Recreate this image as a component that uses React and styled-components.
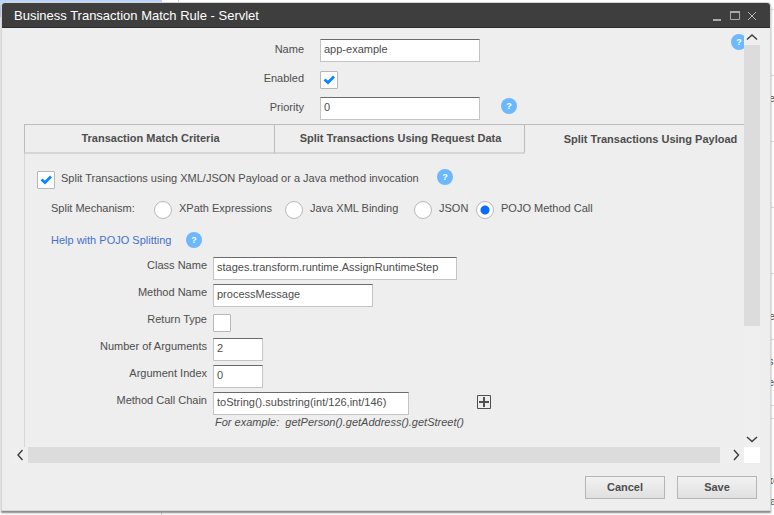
import React, { useState } from 'react';
import styled, { createGlobalStyle, css } from 'styled-components';

const GlobalStyle = createGlobalStyle`
  * { box-sizing: border-box; }
  body {
    margin: 0;
    background: #fff;
    color: #4d4d4d;
    font: 11px/14px "Liberation Sans", Arial, sans-serif;
  }
  button, input { font: inherit; color: inherit; margin: 0; }
`;

const Page = styled.div`
  position: relative;
  min-height: 100vh;
  padding: 3px 4px 5px 2px;
  overflow: hidden;
`;

const Backdrop = styled.div`
  position: absolute;
  inset: 0;
  display: grid;
  grid-template-columns: 162px 17px 1fr 12px;
  overflow: hidden;
`;

const SideList = styled.div`
  border-right: 1px solid #d0d0d0;
  &::before {
    content: '';
    display: block;
    height: 17px;
    background: #bad5fb;
  }
`;

const Gutter = styled.div`
  border-right: 1px solid #d8d8d8;
  margin-bottom: 8px;
`;

const BackRows = styled.div`
  grid-column: 4;
  overflow: hidden;
  white-space: nowrap;
`;

const BackRow = styled.div`
  height: ${(p) => p.$height}px;
  padding: ${(p) => p.$pad || 0}px 0 0 ${(p) => p.$left || 7}px;
  border-bottom: 1px solid #d8d8d8;
  line-height: 21px;
`;

const Dialog = styled.section`
  position: relative;
  background: #eee;
  border-radius: 3px 3px 0 0;
  box-shadow: 0 0 0 1px #d6d6d6, 0 2px 2px 1px #888;
`;

const TitleBar = styled.header`
  display: flex;
  align-items: center;
  height: 25px;
  padding: 1px 12px 0;
  background: #3e3e3e;
  border-bottom: 1px solid #2c2c2c;
  border-radius: 3px 3px 0 0;
  color: #fff;
`;

const Title = styled.h1`
  flex: 1;
  margin: 0;
  font-size: 13px;
  font-weight: normal;
`;

const WindowButtons = styled.div`
  display: flex;
  gap: 6px;
`;

const IconButton = styled.button`
  display: flex;
  align-items: center;
  justify-content: center;
  width: ${(p) => p.$size || 12}px;
  height: ${(p) => p.$size || 12}px;
  padding: 0;
  border: 0;
  background: none;
`;

const ScrollPane = styled.div`
  display: grid;
  grid-template: auto 16px / minmax(0, 1fr) 16px;
  padding: 1px 10px 0;
`;

const Viewport = styled.div`
  position: relative;
  overflow: hidden;
  padding: 10px 0 0 12px;
`;

const ScrollTrack = styled.div`
  display: flex;
  flex-direction: ${(p) => (p.$vertical ? 'column' : 'row')};
  background: #efefef;
`;

const Thumb = styled.div`
  flex: ${(p) => p.$share} 0 0;
  background: #dcdcdc;
`;

const TrackRest = styled.div`
  flex: ${(p) => p.$share} 0 0;
`;

const Corner = styled.div`
  background: #fff;
`;

const TopHelp = styled.div`
  position: absolute;
  top: 5px;
  right: -3px;
`;

const Form = styled.div`
  display: grid;
  grid-template-columns: ${(p) => p.$label}px minmax(0, 1fr);
  column-gap: ${(p) => p.$gap}px;
  row-gap: ${(p) => p.$rowGap}px;
`;

const FieldLabel = styled.label`
  padding-top: ${(p) => p.$top}px;
  text-align: right;
  line-height: 14px;
`;

const Control = styled.div`
  display: flex;
  align-items: center;
  gap: ${(p) => p.$gap || 0}px;
  height: 23px;
`;

const TextInput = styled.input`
  width: ${(p) => p.$width}px;
  height: 23px;
  padding: 0 3px 3px;
  border: 1px solid #c4c4c4;
  border-top-color: #6b6b6b;
  border-radius: 0;
  background: #fff;
  outline: none;
`;

const markBox = css`
  appearance: none;
  display: block;
  width: 18px;
  height: 18px;
  border: 1px solid #b8b8b8;
  background: #fff no-repeat center;
`;

const CheckWrap = styled.span`
  display: grid;
  flex: none;
  > * { grid-area: 1 / 1; }
  svg { pointer-events: none; visibility: hidden; }
  input:checked + svg { visibility: visible; }
`;

const CheckInput = styled.input`
  ${markBox}
  border-radius: 1px;
`;

const RadioInput = styled.input`
  ${markBox}
  flex: none;
  border-radius: 50%;
  &:checked {
    background: radial-gradient(circle, #0a6cff 3px, #0a6cff 4px, #fff 5px);
  }
`;

const HelpButton = styled.button`
  display: block;
  flex: none;
  width: 16px;
  height: 16px;
  padding: 0;
  border: 0;
  border-radius: 50%;
  background: #6bb8ff;
  color: #fff;
  font-weight: bold;
  font-size: 9px;
  line-height: 16px;
  text-align: center;
`;

const HelpRaised = styled.span`
  padding-bottom: 6px;
`;

const Tabs = styled.div`
  display: flex;
  margin-top: 4px;
`;

const Tab = styled.button`
  flex: 0 0 250px;
  height: 30px;
  padding: 0 0 2px 2px;
  border: 1px solid #bcbcbc;
  border-width: 1px 0 2px 1px;
  border-bottom-color: #d6d6d6;
  background: #eee;
  font-weight: bold;
  &[aria-selected='true'] {
    padding-bottom: 0;
    border-bottom-color: #eee;
  }
`;

const Panel = styled.div`
  padding: 17px 0 18px 12px;
  border-left: 1px solid #d6d6d6;
`;

const Line = styled.div`
  display: flex;
  align-items: center;
  gap: ${(p) => p.$gap}px;
  height: 18px;
`;

const Raised = styled.label`
  min-width: ${(p) => p.$min || 0}px;
  padding-bottom: 4px;
`;

const Mechanisms = styled.div`
  display: grid;
  grid-template-columns: 103px 131px 129px 62px auto;
  align-items: center;
  height: 42px;
  padding-left: 14px;
`;

const Legend = styled.span`
  padding-bottom: 4px;
`;

const RadioOption = styled.div`
  display: flex;
  align-items: center;
  gap: 7px;
`;

const HelpRow = styled.div`
  display: flex;
  align-items: center;
  height: 18px;
  padding-left: 14px;
`;

const HelpLink = styled.a`
  min-width: 135px;
  color: #4470d0;
  text-decoration: none;
`;

const CallFields = styled.div`
  padding-top: 8px;
`;

const PlusButton = styled(IconButton)`
  align-self: flex-start;
  margin: 3px 0 0 68px;
`;

const Hint = styled.p`
  margin: 0;
  padding-left: 178px;
  font-style: italic;
`;

const Footer = styled.footer`
  display: flex;
  justify-content: flex-end;
  gap: 12px;
  padding: 13px 13px 11px;
`;

const ActionButton = styled.button`
  width: 80px;
  height: 23px;
  padding: 0 0 2px;
  border: 1px solid #b5b5b5;
  background: linear-gradient(#f2f2f2, #e0e0e0);
  font-weight: bold;
`;

const arrows = {
  up: 'M3 10.5 8 6l5 4.5',
  down: 'M3 6l5 4.5L13 6',
  left: 'M10.5 3 6 8l4.5 5',
  right: 'M6 3l4.5 5L6 13',
};

function Arrow({ to }) {
  return (
    <IconButton type="button" $size={16} aria-label={`Scroll ${to}`}>
      <svg width="16" height="16" fill="none" stroke="#3c3c3c" strokeWidth="1.4">
        <path d={arrows[to]} />
      </svg>
    </IconButton>
  );
}

function Help() {
  return <HelpButton type="button" aria-label="Help">?</HelpButton>;
}

function Checkbox({ id, initial = false }) {
  return (
    <CheckWrap>
      <CheckInput type="checkbox" id={id} defaultChecked={initial} />
      <svg width="18" height="18" fill="none" stroke="#0a84ff" strokeWidth="2.8">
        <path d="M4.5 8.5 8 11.5 14 5.5" />
      </svg>
    </CheckWrap>
  );
}

const tabs = [
  'Transaction Match Criteria',
  'Split Transactions Using Request Data',
  'Split Transactions Using Payload',
];

const mechanisms = ['XPath Expressions', 'Java XML Binding', 'JSON', 'POJO Method Call'];

const callFields = [
  { id: 'class', label: 'Class Name', value: 'stages.transform.runtime.AssignRuntimeStep', width: 244 },
  { id: 'method', label: 'Method Name', value: 'processMessage', width: 160 },
  { id: 'return', label: 'Return Type', check: true },
  { id: 'count', label: 'Number of Arguments', value: '2', width: 50 },
  { id: 'index', label: 'Argument Index', value: '0', width: 50 },
  { id: 'chain', label: 'Method Call Chain', value: 'toString().substring(int/126,int/146)', width: 196, add: true },
];

export default function App() {
  const [tab, setTab] = useState(2);
  const [mechanism, setMechanism] = useState('POJO Method Call');

  return (
    <Page>
      <GlobalStyle />
      <Backdrop aria-hidden="true">
        <SideList />
        <Gutter />
        <BackRows>
          <BackRow $height={10} />
          <BackRow $height={66} />
          <BackRow $height={66} $pad={12}>e</BackRow>
          <BackRow $height={66} />
          <BackRow $height={66} />
          <BackRow $height={66} $pad={32}>e</BackRow>
          <BackRow $height={66} $pad={11} $left={6}>s<br />e</BackRow>
          <BackRow $height={13} />
          <BackRow $height={100} $pad={51} $left={5}><b>xe</b><br />&nbsp;a</BackRow>
        </BackRows>
      </Backdrop>

      <Dialog role="dialog" aria-labelledby="dialog-title">
        <TitleBar>
          <Title id="dialog-title">Business Transaction Match Rule - Servlet</Title>
          <WindowButtons>
            <IconButton type="button" aria-label="Minimize">
              <svg width="12" height="12"><path d="M3 10h8" stroke="#aaa" strokeWidth="2" /></svg>
            </IconButton>
            <IconButton type="button" aria-label="Maximize">
              <svg width="12" height="12" fill="none" stroke="#aaa">
                <path d="M2.5 1.5h9v8h-9z" />
                <path d="M2 2h10" strokeWidth="2" />
              </svg>
            </IconButton>
            <IconButton type="button" aria-label="Close">
              <svg width="12" height="12" stroke="#b5b5b5"><path d="M2 2l8 8M10 2l-8 8" /></svg>
            </IconButton>
          </WindowButtons>
        </TitleBar>

        <ScrollPane>
          <Viewport>
            <TopHelp><Help /></TopHelp>
            <Form $label={280} $gap={16} $rowGap={6}>
              <FieldLabel htmlFor="name" $top={3}>Name</FieldLabel>
              <Control><TextInput id="name" defaultValue="app-example" $width={160} /></Control>
              <FieldLabel htmlFor="enabled" $top={3}>Enabled</FieldLabel>
              <Control><Checkbox id="enabled" initial /></Control>
              <FieldLabel htmlFor="priority" $top={3}>Priority</FieldLabel>
              <Control $gap={21}>
                <TextInput id="priority" defaultValue="0" $width={160} />
                <HelpRaised><Help /></HelpRaised>
              </Control>
            </Form>

            <Tabs role="tablist">
              {tabs.map((name, i) => (
                <Tab key={name} type="button" role="tab" aria-selected={tab === i} onClick={() => setTab(i)}>
                  {name}
                </Tab>
              ))}
            </Tabs>

            <Panel>
              <Line $gap={6}>
                <Checkbox id="split" initial />
                <Raised htmlFor="split" $min={370}>
                  Split Transactions using XML/JSON Payload or a Java method invocation
                </Raised>
                <HelpRaised><Help /></HelpRaised>
              </Line>
              <Mechanisms role="radiogroup" aria-label="Split Mechanism">
                <Legend>Split Mechanism:</Legend>
                {mechanisms.map((m) => (
                  <RadioOption key={m}>
                    <RadioInput
                      type="radio"
                      name="mechanism"
                      id={m}
                      checked={mechanism === m}
                      onChange={() => setMechanism(m)}
                    />
                    <Raised htmlFor={m}>{m}</Raised>
                  </RadioOption>
                ))}
              </Mechanisms>
              <HelpRow>
                <HelpLink href="#pojo-splitting">Help with POJO Splitting</HelpLink>
                <Help />
              </HelpRow>
              <CallFields>
                <Form $label={170} $gap={6} $rowGap={4}>
                  {callFields.map((f) => (
                    <React.Fragment key={f.id}>
                      <FieldLabel htmlFor={f.id} $top={1}>{f.label}</FieldLabel>
                      <Control>
                        {f.check ? <Checkbox id={f.id} /> : (
                          <TextInput id={f.id} defaultValue={f.value} $width={f.width} />
                        )}
                        {f.add && (
                          <PlusButton type="button" $size={14} aria-label="Add method call">
                            <svg width="14" height="14" fill="none" stroke="#505050">
                              <path d="M.5.5h13v13H.5z" />
                              <path d="M7 2v10M2 7h10" strokeWidth="2" />
                            </svg>
                          </PlusButton>
                        )}
                      </Control>
                    </React.Fragment>
                  ))}
                </Form>
                <Hint>For example: &nbsp;getPerson().getAddress().getStreet()</Hint>
              </CallFields>
            </Panel>
          </Viewport>

          <ScrollTrack $vertical>
            <Arrow to="up" />
            <Thumb $share={281} />
            <TrackRest $share={105} />
            <Arrow to="down" />
          </ScrollTrack>
          <ScrollTrack>
            <Arrow to="left" />
            <Thumb $share={692} />
            <TrackRest $share={8} />
            <Arrow to="right" />
          </ScrollTrack>
          <Corner />
        </ScrollPane>

        <Footer>
          <ActionButton type="button">Cancel</ActionButton>
          <ActionButton type="button">Save</ActionButton>
        </Footer>
      </Dialog>
    </Page>
  );
}
